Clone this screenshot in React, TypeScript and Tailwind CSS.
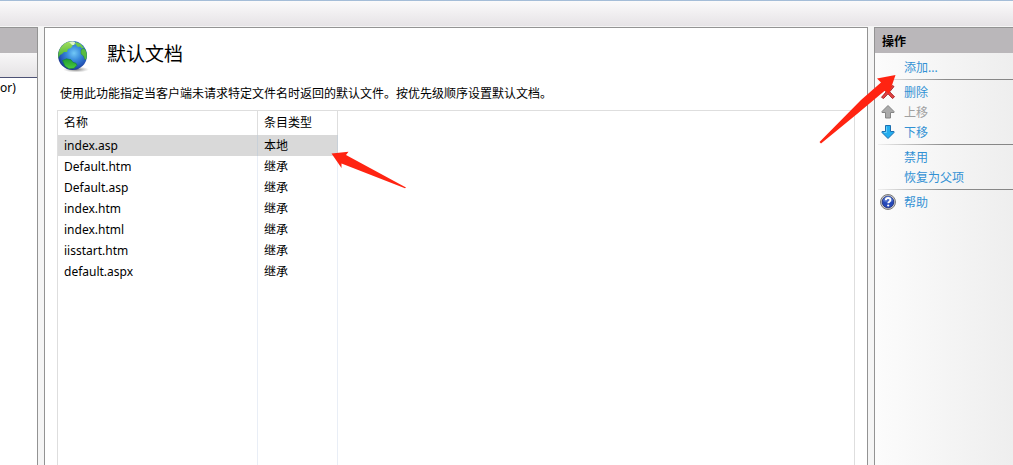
import type { ReactNode } from 'react';

const documents = [
  { name: 'index.asp', type: '本地', selected: true },
  { name: 'Default.htm', type: '继承' },
  { name: 'Default.asp', type: '继承' },
  { name: 'index.htm', type: '继承' },
  { name: 'index.html', type: '继承' },
  { name: 'iisstart.htm', type: '继承' },
  { name: 'default.aspx', type: '继承' },
];

function GlobeIcon() {
  return (
    <svg viewBox="0 0 32 32" className="size-8 shrink-0" aria-hidden="true">
      <defs>
        <radialGradient id="sea" cx="0.55" cy="0.42" r="0.6">
          <stop offset="0" stopColor="#72c8f6" />
          <stop offset="0.4" stopColor="#3b8cdc" />
          <stop offset="0.8" stopColor="#2456b8" />
          <stop offset="1" stopColor="#1a3286" />
        </radialGradient>
        <linearGradient id="land" x1="0" y1="0" x2="0" y2="1">
          <stop offset="0" stopColor="#a8e060" />
          <stop offset="1" stopColor="#3cb030" />
        </linearGradient>
        <linearGradient id="south" x1="0" y1="0" x2="0" y2="1">
          <stop offset="0" stopColor="#1f9a34" />
          <stop offset="1" stopColor="#4ccc3c" />
        </linearGradient>
        <radialGradient id="shade">
          <stop offset="0" stopColor="#555" stopOpacity="0.8" />
          <stop offset="1" stopColor="#888" stopOpacity="0" />
        </radialGradient>
        <clipPath id="ball">
          <circle cx="15.5" cy="15.5" r="14.3" />
        </clipPath>
      </defs>
      <ellipse cx="19" cy="29.5" rx="13" ry="3" fill="url(#shade)" />
      <circle cx="15.5" cy="15.5" r="14.5" fill="url(#sea)" />
      <g clipPath="url(#ball)">
        <path d="M1 13C1 6 7 1 13 1l5 1 1 2-3 1-2 3-3 1-1 3-3 0-2 2-2 1-2 4-2-1z" fill="url(#land)" />
        <path d="M5.500 20.500l4-1.700 4.500 1 2 2.500 3 1 1 2-3 3-5 .5-4-2.500z" fill="url(#south)" stroke="#167a3a" strokeWidth="0.600" />
        <path d="M19 2l5 2 3 4-2 .5-2-2-2 .5-2-2z" fill="#6cc84c" />
        <path d="M24 10l2-1.500 2 .5 2 4 0 5-2 2-1.500-4-2.500-2z" fill="#58bc40" stroke="#237c38" strokeWidth="0.400" />
        <path d="M12 2l4-1 2 1-1 3-2 0z" fill="#f2fbe8" opacity="0.800" />
      </g>
    </svg>
  );
}

function DeleteIcon() {
  return (
    <svg viewBox="0 0 16 16" className="size-4" aria-hidden="true">
      <path d="M2 4L4 2l4 4.300L12.500 1.500l1.500 1L9.700 7.800l4.800 5-2 1.700L8 9.800 3.500 14.500 1.500 13.300l4.700-5.500z" fill="#e04444" stroke="#a8181c" strokeWidth="0.900" strokeLinejoin="round" />
    </svg>
  );
}

function UpIcon() {
  return (
    <svg viewBox="0 0 16 16" className="size-4" aria-hidden="true">
      <path d="M8 1.500L14 7.500v1h-3.500v5.500h-5V8.500H2v-1z" fill="#aaaaaa" stroke="#848484" strokeLinejoin="round" />
    </svg>
  );
}

function DownIcon() {
  return (
    <svg viewBox="0 0 16 16" className="size-4" aria-hidden="true">
      <path d="M5.500 1.500h5v6H14v1L8 14.500l-6-6v-1h3.500z" fill="#23adee" stroke="#1d6fb0" strokeLinejoin="round" />
      <path d="M6.500 2.500v6H4" fill="none" stroke="#6accf6" />
    </svg>
  );
}

function HelpIcon() {
  return (
    <svg viewBox="0 0 16 16" className="size-4" aria-hidden="true">
      <circle cx="8" cy="8" r="7.500" fill="#c8c8c8" stroke="#7c7c7c" />
      <circle cx="8" cy="8" r="5.800" fill="#2448b8" stroke="#1a2c7c" strokeWidth="0.800" />
      <path d="M3 7a5 5 0 0 1 10 0q-5 3-10 0z" fill="#6688da" opacity="0.550" />
      <path d="M5.800 6.200c0-3 4.600-2.800 4.600-.2 0 1.700-2.200 1.600-2.200 3.300" fill="none" stroke="#fff" strokeWidth="1.900" />
      <circle cx="8.200" cy="11.500" r="1.100" fill="#fff" />
    </svg>
  );
}

function Action({ label, icon, disabled }: { label: string; icon?: ReactNode; disabled?: boolean }) {
  return (
    <button
      type="button"
      disabled={disabled}
      className="flex h-5 w-full items-center gap-2 pl-1 text-left text-[#3291d4] disabled:text-[#a0a0a0]"
    >
      <span className="size-4 shrink-0">{icon}</span>
      <span className="pt-0.5">{label}</span>
    </button>
  );
}

function Separator() {
  return <hr className="my-0.5 ml-0.5 h-px border-0 bg-linear-to-r from-[#f0f0f0] via-[#8c8c8c] via-50% to-[#858585]" />;
}

export default function App() {
  return (
    <div className="flex min-h-screen flex-col bg-[#f5f5f5] font-['Noto_Sans','Noto_Sans_CJK_SC',sans-serif] text-xs text-black">
      <header className="mb-px h-[26px] border-t border-[#a5bdd8] bg-linear-to-b from-[#fbfafb] to-[#e6e3e6]" />

      <div className="grid flex-1 grid-cols-[38px_minmax(0,1fr)_139px] gap-x-1.5">
        <aside className="border-t border-r border-[#939393] bg-white">
          <div className="h-[25px] bg-[#bab7ba]" />
          <div className="h-[25px] border-b border-[#4d5275] bg-linear-to-b from-[#f8f7f8] to-[#e5e3e5]" />
          <div className="h-5 leading-5">or)</div>
        </aside>

        <main className="flex flex-col border-x border-t border-[#939393] bg-white px-3 pt-3">
          <div className="flex gap-[18px]">
            <GlobeIcon />
            <h1 className="text-[19px] leading-7">默认文档</h1>
          </div>
          <p className="mt-[13px] mb-[7px] pl-[3px] leading-[18px]">
            使用此功能指定当客户端未请求特定文件名时返回的默认文件。按优先级顺序设置默认文档。
          </p>

          <div className="relative flex flex-1 flex-col border-x border-t border-[#dedede]">
            <table className="w-[280px] table-fixed border-separate border-spacing-0 text-left">
              <thead>
                <tr className="h-6">
                  <th scope="col" className="w-[200px] border-r border-[#dedede] p-0 pl-1.5 font-normal">名称</th>
                  <th scope="col" className="border-r border-[#dedede] p-0 pl-1.5 font-normal">条目类型</th>
                </tr>
              </thead>
              <tbody>
                {documents.map((doc) => (
                  <tr key={doc.name} className={doc.selected ? 'h-[21px] bg-[#d9d9d9]' : 'h-[21px]'}>
                    <td className={doc.selected ? 'border-r border-[#c8d0d8] p-0 pl-1.5' : 'border-r border-[#e9eef6] p-0 pl-1.5'}>{doc.name}</td>
                    <td className={doc.selected ? 'border-r border-[#c8d0d8] p-0 pl-1.5' : 'border-r border-[#e9eef6] p-0 pl-1.5'}>{doc.type}</td>
                  </tr>
                ))}
              </tbody>
            </table>
            <div className="grid w-[280px] flex-1 grid-cols-[200px_80px]">
              <div className="border-r border-[#e9eef6]" />
              <div className="border-r border-[#e9eef6]" />
            </div>
            <svg viewBox="0 0 76 38" className="absolute top-10 left-[273px] h-[38px] w-[76px]" aria-hidden="true">
              <path d="M0.500 2.500L17.500 0.800L15 4L75 36.500L74 37.300L10.500 12.500L10.500 17z" fill="#ff2412" />
            </svg>
          </div>
        </main>

        <aside className="relative border-t border-l border-[#939393] bg-linear-to-r from-[#fcfcfc] to-[#eeeeee]">
          <h2 className="flex h-[25px] items-center bg-[#bab7ba] pt-0.5 pl-[7px] font-bold">操作</h2>
          <nav className="pt-1 pl-px" aria-label="操作">
            <Action label="添加..." />
            <Separator />
            <Action label="删除" icon={<DeleteIcon />} />
            <Action label="上移" icon={<UpIcon />} disabled />
            <Action label="下移" icon={<DownIcon />} />
            <Separator />
            <Action label="禁用" />
            <Action label="恢复为父项" />
            <Separator />
            <a href="#help" className="flex h-5 items-center gap-2 pl-1 text-[#3291d4]">
              <HelpIcon />
              <span className="pt-0.5">帮助</span>
            </a>
          </nav>
          <svg viewBox="0 0 78 70" className="pointer-events-none absolute top-[46px] -left-14 h-[70px] w-[78px]" aria-hidden="true">
            <path d="M76.500 1L58 4.500L62 8.500L42 26L0.500 68L2 69.500L38 40L66 16.500L70 20z" fill="#ff2412" />
          </svg>
        </aside>
      </div>
    </div>
  );
}
